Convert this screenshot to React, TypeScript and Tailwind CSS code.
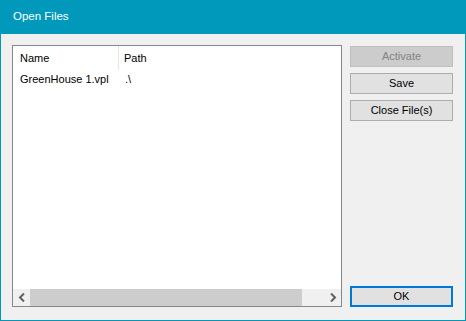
export default function App() {
  const font = { fontFamily: '"Segoe UI", "Liberation Sans", Arial, sans-serif' };
  return (
    <div className="w-[466px] h-[321px] flex flex-col bg-[#f0f0f0] text-[11px] text-black" style={font}>
      <div className="h-[34px] bg-[#0099bc] text-white flex items-center pl-[13px] shrink-0 text-[11.5px]">Open Files</div>
      <div className="flex-1 flex border-x border-b border-[#0099bc] pt-[11px] pl-[11px] pr-[11px] pb-[13px]">
        <div className="w-[330px] h-[262px] border border-[#828790] bg-white flex flex-col">
          <div className="flex-1 flex flex-col">
            <div className="h-[24px] flex items-center">
              <div className="w-[106px] h-full flex items-center pl-[7px] border-r border-[#e5e5e5]">Name</div>
              <div className="pl-[5px]">Path</div>
            </div>
            <div className="h-[19px] flex items-center">
              <div className="w-[106px] pl-[7px]">GreenHouse 1.vpl</div>
              <div className="pl-[6px]">.\</div>
            </div>
          </div>
          <div className="h-[17px] flex bg-[#f0f0f0]">
            <div className="w-[17px] flex items-center justify-center">
              <svg width="8" height="9" viewBox="0 0 8 9"><path d="M6 0.5 L2 4.5 L6 8.5" stroke="#606060" strokeWidth="2" fill="none" /></svg>
            </div>
            <div className="w-[272px] bg-[#cdcdcd]"></div>
            <div className="flex-1"></div>
            <div className="w-[17px] flex items-center justify-center">
              <svg width="8" height="9" viewBox="0 0 8 9"><path d="M2 0.5 L6 4.5 L2 8.5" stroke="#606060" strokeWidth="2" fill="none" /></svg>
            </div>
          </div>
        </div>
        <div className="ml-[8px] w-[103px] flex flex-col pt-[1px]">
          <div className="h-[21px] border border-[#bfbfbf] bg-[#cccccc] text-[#838383] flex items-center justify-center">Activate</div>
          <div className="mt-[6px] h-[21px] border border-[#adadad] bg-[#e1e1e1] flex items-center justify-center">Save</div>
          <div className="mt-[6px] h-[21px] border border-[#adadad] bg-[#e1e1e1] flex items-center justify-center">Close File(s)</div>
          <div className="flex-1"></div>
          <div className="h-[21px] border-2 border-[#0078d7] bg-[#e1e1e1] flex items-center justify-center">OK</div>
        </div>
      </div>
    </div>
  );
}
